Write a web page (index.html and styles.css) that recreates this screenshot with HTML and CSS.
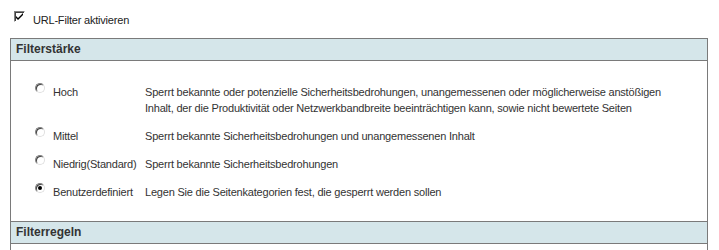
FILE: index.html
```html
<!DOCTYPE html>
<html lang="de">

<head>
    <meta charset="UTF-8">
    <title>URL-Filter</title>
    <link rel="stylesheet" href="styles.css">
</head>

<body>
    <div class="enable-row">
        <span class="check">
            <svg width="11" height="11" viewBox="0 0 11 11">
                <path d="M2 5 L4 7 L9 2 L9 4 L4 9 L2 7 Z" fill="#000"/>
            </svg>
        </span>
        <span class="enable-label">URL-Filter aktivieren</span>
    </div>

    <div class="panel">
        <div class="panel-head">Filterstärke</div>
        <div class="panel-body">
            <ul class="levels">
                <li class="level">
                    <span class="radio"></span>
                    <span class="level-name">Hoch</span>
                    <span class="level-desc">Sperrt bekannte oder potenzielle Sicherheitsbedrohungen, unangemessenen oder möglicherweise anstößigen Inhalt, der die Produktivität oder Netzwerkbandbreite beeinträchtigen kann, sowie nicht bewertete Seiten</span>
                </li>
                <li class="level">
                    <span class="radio"></span>
                    <span class="level-name">Mittel</span>
                    <span class="level-desc">Sperrt bekannte Sicherheitsbedrohungen und unangemessenen Inhalt</span>
                </li>
                <li class="level">
                    <span class="radio"></span>
                    <span class="level-name">Niedrig(Standard)</span>
                    <span class="level-desc">Sperrt bekannte Sicherheitsbedrohungen</span>
                </li>
                <li class="level">
                    <span class="radio checked"></span>
                    <span class="level-name">Benutzerdefiniert</span>
                    <span class="level-desc">Legen Sie die Seitenkategorien fest, die gesperrt werden sollen</span>
                </li>
            </ul>
        </div>
        <div class="panel-head">Filterregeln</div>
        <div class="panel-body"></div>
    </div>
</body>

</html>
```

FILE: styles.css
```css
* {
    margin: 0;
    padding: 0;
    box-sizing: border-box;
}

li {
    list-style: none;
}

body {
    font-family: "Liberation Sans", Arial, sans-serif;
    font-size: 11px;
    letter-spacing: -0.2px;
    color: #333;
    background-color: #fff;
}

.enable-row {
    display: flex;
    align-items: flex-start;
    height: 38px;
    padding: 11px 0 0 14px;
}

.check {
    display: inline-block;
    width: 11px;
    height: 11px;
    border: 1px solid;
    border-color: #808080 #fff #fff #808080;
    box-shadow: inset 1px 1px 0 #404040;
    background-color: #fff;
}

.check svg {
    display: block;
    margin: -1px 0 0 -1px;
}

.enable-label {
    margin: 2px 0 0 8px;
    font-size: 11px;
    line-height: 14px;
    color: #222;
}

.panel {
    margin-left: 10px;
    width: 698px;
    border-left: 1px solid #7a7a7a;
    border-right: 1px solid #7a7a7a;
}

.panel-head {
    height: 23px;
    line-height: 21px;
    padding-left: 5px;
    background-color: #d5e6ea;
    border-top: 1px solid #7a7a7a;
    border-bottom: 1px solid #7a7a7a;
    font-size: 12px;
    font-weight: bold;
    letter-spacing: 0;
    color: #333;
}

.panel-body {
    min-height: 8px;
}

.levels {
    padding: 23px 0 21px 24px;
}

.level {
    display: flex;
    align-items: flex-start;
    line-height: 16px;
    margin-bottom: 12px;
}

.level:last-child {
    margin-bottom: 0;
}

.radio {
    flex: none;
    width: 10px;
    height: 10px;
    margin-top: -1px;
    border-radius: 50%;
    border: 1px solid;
    border-color: #808080 #e0e0e0 #e0e0e0 #808080;
    box-shadow: inset 1px 1px 0 #404040;
    background-color: #fff;
    position: relative;
}

.radio.checked::after {
    content: "";
    position: absolute;
    left: 2px;
    top: 2px;
    width: 4px;
    height: 4px;
    border-radius: 50%;
    background-color: #000;
}

.level-name {
    flex: none;
    width: 92px;
    margin-left: 8px;
}

.level-desc {
    width: 530px;
}
```
